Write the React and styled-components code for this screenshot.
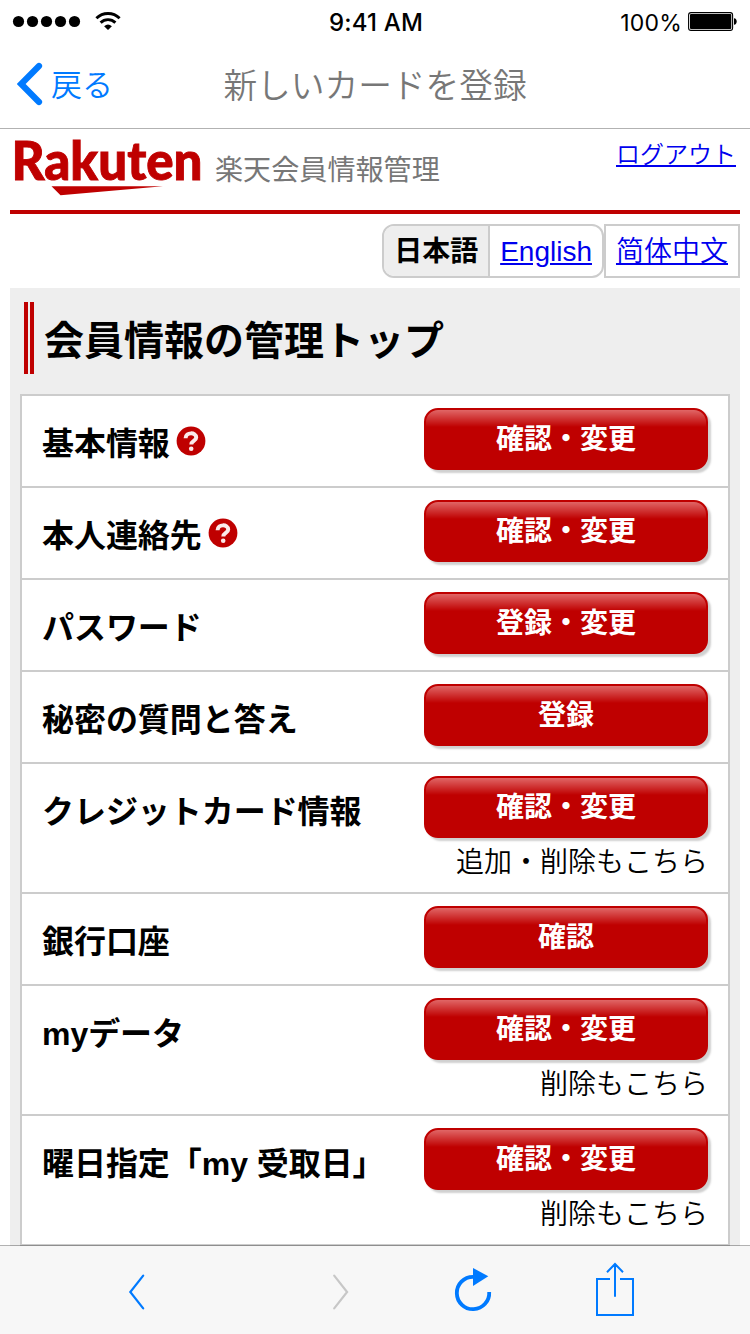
import React from "react";
import styled, { createGlobalStyle } from "styled-components";

const rows = [
  { label: "基本情報", help: true, action: "確認・変更" },
  { label: "本人連絡先", help: true, action: "確認・変更" },
  { label: "パスワード", action: "登録・変更" },
  { label: "秘密の質問と答え", action: "登録" },
  { label: "クレジットカード情報", action: "確認・変更", note: "追加・削除もこちら" },
  { label: "銀行口座", action: "確認" },
  { label: "myデータ", action: "確認・変更", note: "削除もこちら" },
  { label: "曜日指定「my 受取日」", action: "確認・変更", note: "削除もこちら" }
];

function App() {
  return (
    <Screen>
      <GlobalStyle />
      <StatusBar>
        <Signal>
          <svg width="124" height="40" viewBox="0 0 124 40">
            <g fill="#000">
              <circle cx="18.5" cy="20.5" r="5.6" />
              <circle cx="32.5" cy="20.5" r="5.6" />
              <circle cx="46.5" cy="20.5" r="5.6" />
              <circle cx="60.5" cy="20.5" r="5.6" />
              <circle cx="74.5" cy="20.5" r="5.6" />
              <path d="M108 28.9l-3.9-3.7q3.9-3.2 7.8 0z" />
            </g>
            <g fill="none" stroke="#000" strokeWidth="2.9">
              <path d="M96.4 17.2a16.6 16.6 0 0 1 23.2 0" />
              <path d="M100.6 21.6a10.6 10.6 0 0 1 14.8 0" />
            </g>
          </svg>
        </Signal>
        <Clock>9:41 AM</Clock>
        <Battery>
          <span>100%</span>
          <svg width="50" height="20" viewBox="0 0 50 20">
            <rect x="0.6" y="0.6" width="44" height="17.8" rx="2.4" fill="none" stroke="#000" strokeWidth="1.1" />
            <rect x="2" y="2" width="41.3" height="15" rx="1" />
            <path d="M46 6.2q2.7.4 2.7 3.3T46 12.8z" />
          </svg>
        </Battery>
      </StatusBar>

      <NavBar>
        <Back>
          <svg width="26" height="44" viewBox="0 0 26 44">
            <path d="M22 4L4.2 22 22 40" fill="none" stroke="#007aff" strokeWidth="6.2" strokeLinecap="round" />
          </svg>
          <BackText>戻る</BackText>
        </Back>
        <NavTitle>新しいカードを登録</NavTitle>
      </NavBar>

      <Page>
        <Header>
          <Brand>
            <Logo width="190" height="60" viewBox="0 0 190 60">
              <text x="-1.5" y="43" textLength="191" lengthAdjust="spacingAndGlyphs">
                Rakuten
              </text>
              <path d="M38.5 49.2h111.5L47.5 58.2z" />
            </Logo>
            <Service>楽天会員情報管理</Service>
          </Brand>
          <Logout href="#">ログアウト</Logout>
        </Header>

        <Languages>
          <LangGroup>
            <Current>日本語</Current>
            <Lang href="#">English</Lang>
          </LangGroup>
          <LangBox>
            <Lang href="#">简体中文</Lang>
          </LangBox>
        </Languages>

        <Panel>
          <Heading>会員情報の管理トップ</Heading>
          <List>
            {rows.map(row => (
              <Row key={row.label} $tall={!!row.note}>
                <Label>
                  {row.label}
                  {row.help && <HelpIcon />}
                </Label>
                <Actions>
                  <Button>{row.action}</Button>
                  {row.note && <Note>{row.note}</Note>}
                </Actions>
              </Row>
            ))}
          </List>
        </Panel>
      </Page>

      <Toolbar>
        <svg width="750" height="88" viewBox="0 0 750 88" fill="none" strokeWidth="2.2">
          <path d="M143.2 29.6L130.3 46l12.9 16.4" stroke="#007aff" strokeLinecap="round" />
          <path d="M334.2 29.6L347.1 46l-12.9 16.4" stroke="#c7c7c7" strokeLinecap="round" />
          <path d="M473 30.8A16.2 16.2 0 1 0 489.2 46" stroke="#007aff" strokeWidth="3.8" />
          <path d="M473 22l15.3 8.2L473 40z" fill="#007aff" />
          <path d="M610 33h-13v36h36V33h-13M615 50.8V19M607 26.2l8-8.2 8 8.2" stroke="#007aff" strokeWidth="2" />
        </svg>
      </Toolbar>
    </Screen>
  );
}

function HelpIcon() {
  return (
    <Help width="30" height="30" viewBox="0 0 30 30">
      <circle cx="15" cy="15" r="14.4" fill="#bf0000" />
      <path
        d="M9.6 12.2c0-6.4 10.6-6.2 10.6-.8 0 3.6-4.9 3.4-4.9 7"
        fill="none"
        stroke="#fbeaea"
        strokeWidth="4"
      />
      <circle cx="15.2" cy="22.8" r="2.3" fill="#fbeaea" />
    </Help>
  );
}

const GlobalStyle = createGlobalStyle`
  *, *::before {
    box-sizing: border-box;
  }
  body {
    margin: 0;
    background: #fff;
    color: #000;
    font-family: "Liberation Sans", "Noto Sans CJK JP", sans-serif;
  }
  svg {
    display: block;
    flex: none;
  }
`;

const Screen = styled.div`
  width: 750px;
  height: 1334px;
  display: flex;
  flex-direction: column;
  overflow: hidden;
`;
const StatusBar = styled.div`
  height: 40px;
  flex: none;
  display: grid;
  grid-template-columns: 1fr auto 1fr;
  align-items: center;
  font-family: Inter, sans-serif;
  font-size: 23px;
  line-height: 38px;
`;
const Signal = styled.div`
  svg {
    overflow: visible;
  }
`;
const Clock = styled.div`
  font-weight: 450;
  font-size: 24px;
  letter-spacing: 0.2px;
  padding: 4px 0 0 2px;
`;
const Battery = styled.div`
  display: flex;
  justify-content: flex-end;
  align-items: center;
  gap: 6px;
  padding-right: 12px;
  padding-top: 2px;

  span {
    padding-top: 2px;
    letter-spacing: 0.2px;
  }
`;
const NavBar = styled.div`
  height: 89px;
  flex: none;
  display: grid;
  grid-template-columns: 1fr auto 1fr;
  align-items: center;
  border-bottom: 1px solid #b2b2b2;
  font-family: "Noto Sans CJK JP", sans-serif;
  font-weight: 350;
`;
const Back = styled.div`
  display: flex;
  align-items: center;
  padding-left: 17px;
  gap: 8px;
  color: #007aff;
`;
const BackText = styled.span`
  font-size: 31px;
  line-height: 40px;
  padding-bottom: 2px;
`;
const NavTitle = styled.div`
  color: #777;
  font-size: 33.7px;
  line-height: 44px;
`;
const Page = styled.div`
  flex: 1;
  min-height: 0;
  overflow: hidden;
  padding: 0 10px;
`;
const Header = styled.div`
  height: 85px;
  display: flex;
  justify-content: space-between;
  border-bottom: 4px solid #bf0000;
`;
const Brand = styled.div`
  display: flex;
  padding: 8px 0 0 3px;
  gap: 12px;
`;
const Logo = styled.svg`
  overflow: visible;
  fill: #bf0000;
  font-family: Lato, sans-serif;
  font-size: 53px;
  font-weight: 900;

  text {
    stroke: #bf0000;
    stroke-width: 0.9px;
  }
`;
const Service = styled.div`
  padding-top: 14px;
  color: #777;
  font-size: 28.1px;
  line-height: 40px;
`;
const Logout = styled.a`
  padding: 8px 4px 0 0;
  color: #0000ee;
  font-size: 24px;
  line-height: 36px;
  font-weight: 350;
`;
const Languages = styled.div`
  display: flex;
  justify-content: flex-end;
  padding: 10px 0;
  font-size: 28px;
  line-height: 51px;
`;
const LangGroup = styled.div`
  height: 54px;
  display: flex;
  border: 2px solid #ccc;
  border-radius: 12px;
  overflow: hidden;
`;
const LangBox = styled.div`
  height: 54px;
  border: 2px solid #ccc;
`;
const Current = styled.div`
  padding: 0 10px;
  border-right: 2px solid #ccc;
  background: #eee;
  font-weight: 700;
`;
const Lang = styled.a`
  display: block;
  padding: 0 10px;
  color: #0000ee;
  font-family: "Liberation Sans", "Noto Sans CJK SC", sans-serif;
  font-weight: 350;
`;
const Panel = styled.div`
  padding: 14px 10px 20px;
  background: #eee;
`;
const Heading = styled.h1`
  display: flex;
  height: 72px;
  margin: 0 0 20px 4px;
  font-size: 40px;
  line-height: 78px;

  &::before {
    content: "";
    width: 10px;
    margin-right: 10px;
    border: solid #bf0000;
    border-width: 0 4px;
  }
`;
const List = styled.div`
  border: 2px solid #ccc;
  background: #fff;
`;
const Row = styled.div`
  height: ${props => (props.$tall ? "130px" : "92px")};
  display: flex;
  justify-content: space-between;
  padding: 12px 20px 0;
  border-bottom: 2px solid #ccc;
`;
const Label = styled.div`
  display: flex;
  align-items: center;
  height: 65px;
  font-size: 32px;
  font-weight: 700;
  letter-spacing: -0.05px;
  white-space: pre;
`;
const Help = styled.svg`
  margin-left: 6px;
`;
const Actions = styled.div`
  display: flex;
  flex-direction: column;
  align-items: flex-end;
`;
const Button = styled.button`
  width: 284px;
  height: 62px;
  padding: 0 0 4px;
  border: 2px solid #bf0000;
  border-radius: 14px;
  background: #bf0000 linear-gradient(#e06666, #bf0000 17px, #bf0000);
  box-shadow: 3px 3px 2px #d0d0d0;
  color: #fff;
  font-family: inherit;
  font-size: 28px;
  font-weight: 700;
`;
const Note = styled.div`
  padding-top: 5px;
  font-size: 28px;
  font-weight: 350;
  line-height: 40px;
`;
const Toolbar = styled.div`
  height: 89px;
  flex: none;
  margin-top: -1px;
  border-top: 1px solid rgba(0, 0, 0, 0.3);
  background: #f7f7f7;
  background-clip: padding-box;
  z-index: 1;
`;

export default App;
